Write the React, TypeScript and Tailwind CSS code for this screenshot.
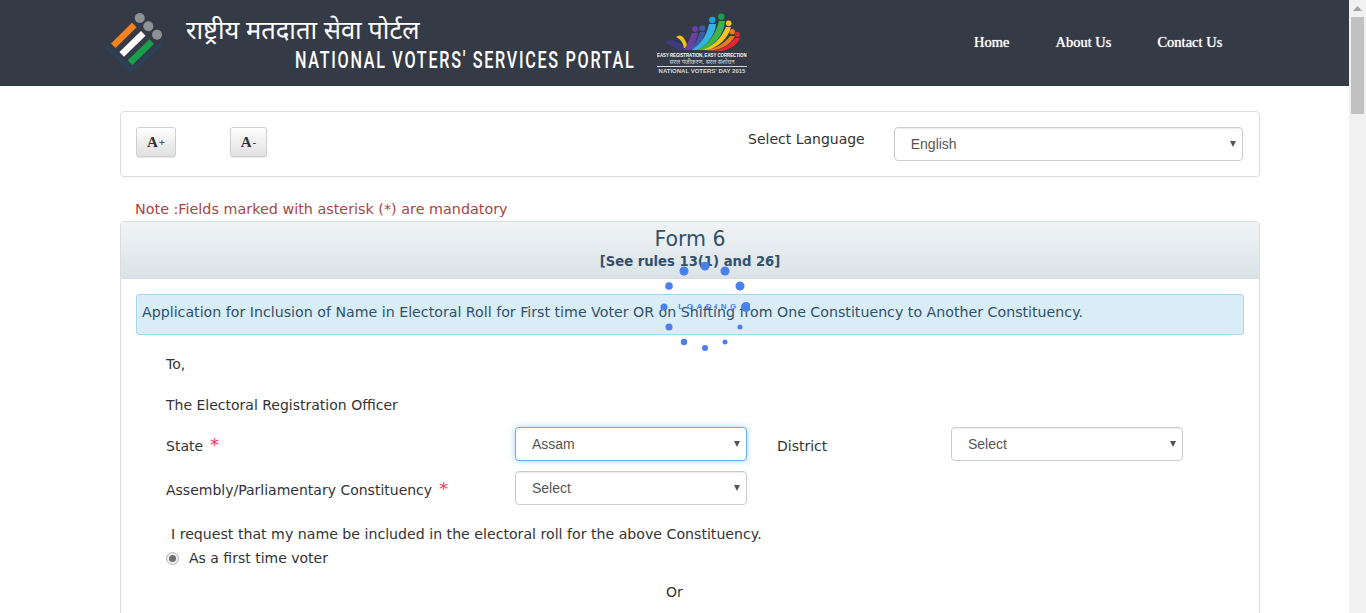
import React from 'react';

const sans = 'font-["DejaVu_Sans",Verdana,sans-serif]';

function PortalLogo() {
  return (
    <svg width="62" height="62" viewBox="0 0 62 62" className="shrink-0">
      <path d="M1 34.7 L26.7 58.7 L56.7 31.3" fill="none" stroke="#1d4a72" strokeWidth="2.5" strokeDasharray="2 1" />
      <g fill="#8f9193">
        <circle cx="34.7" cy="6" r="5" />
        <circle cx="43.3" cy="14.3" r="5" />
        <circle cx="52" cy="22.7" r="5" />
      </g>
      <g strokeWidth="6.5">
        <path d="M8.3 33.7 L29.3 13" stroke="#f58220" />
        <path d="M16.7 42.3 L38.3 21.3" stroke="#ffffff" />
        <path d="M25 50.7 L46.7 29.7" stroke="#16a04a" />
      </g>
    </svg>
  );
}

function VotersDayLogo() {
  return (
    <div className="flex w-[90px] flex-col">
      <svg width="90" height="38" viewBox="0 0 90 38">
        <path d="M8 29 C16 25 22 28 30 37 L22 37 C16 34 12 31 8 29 Z" fill="#3d3a80" />
        <path d="M19 24 C24 20 28 24 31 35 L27 35 C26 29 23 26 19 24 Z" fill="#f0c020" />
        <path d="M27 37 C31 30 33 25 35 20 L41 20 C40 27 36 33 33 37 Z" fill="#6b3fa0" />
        <path d="M32 37 C37 32 41 27 43 19 L48 19 C47 27 41 33 36 37 Z" fill="#3c5aa8" />
        <path d="M35 37 C44 31 50 22 52 11 L59 11 C58 23 49 32 41 37 Z" fill="#36b3e0" />
        <path d="M40 37 C50 32 59 22 62 8 L68 8 C67 23 56 33 46 37 Z" fill="#3cb44a" />
        <path d="M45 37 C55 34 64 26 69 14 L74 14 C71 26 61 34 51 37 Z" fill="#f5c518" />
        <path d="M50 37 C60 35 68 30 73 23 L78 23 C74 31 65 36 55 37.5 Z" fill="#ec7a24" />
        <path d="M54 38 C64 37 73 32 78 25 L83 25 C80 33 70 38 60 38.5 Z" fill="#e8262a" />
        <circle cx="38" cy="16" r="3" fill="#6b3fa0" />
        <circle cx="45.3" cy="15.3" r="3" fill="#3c5aa8" />
        <circle cx="55.3" cy="7" r="3.2" fill="#1fa3e0" />
        <circle cx="64.3" cy="3.7" r="3.2" fill="#16a04a" />
        <circle cx="71.7" cy="10.3" r="2.8" fill="#f5c518" />
        <circle cx="75.3" cy="18.7" r="2.6" fill="#ec7a24" />
        <circle cx="80.3" cy="21.3" r="2.6" fill="#e8262a" />
      </svg>
      <div className="mt-[1px] w-max origin-left scale-x-[0.72] font-['Liberation_Sans',sans-serif] text-[6px] leading-[7px] font-bold whitespace-nowrap text-white">
        EASY REGISTRATION, EASY CORRECTION
      </div>
      <div className="h-[6px] w-full text-center font-['Noto_Sans',sans-serif] text-[6px] leading-[6px] whitespace-nowrap text-[#d5d7da]">
        सरल पंजीकरण, सरल संशोधन
      </div>
      <div className="mt-[1px] h-px w-full bg-[#d5d7da]" />
      <div className="mt-[1px] w-full text-center font-['Liberation_Sans',sans-serif] text-[6px] leading-[7px] font-bold whitespace-nowrap text-[#d5d7da]">
        NATIONAL VOTERS' DAY 2015
      </div>
    </div>
  );
}

function Header() {
  return (
    <header className="flex h-[86px] shrink-0 items-start bg-[#343b46]">
      <div className="mt-[12px] ml-[105px]">
        <PortalLogo />
      </div>
      <div className="ml-[19px] w-[450px] text-white">
        <div className="mt-[11px] font-['Noto_Sans','Noto_Sans_Devanagari',sans-serif] text-[25.5px] leading-[36px] whitespace-nowrap">
          राष्ट्रीय मतदाता सेवा पोर्टल
        </div>
        <div className="mt-[1px] ml-[109px] w-max origin-left scale-x-[0.675] font-['Roboto',sans-serif] text-[24px] leading-[24px] font-medium tracking-[2.5px] whitespace-nowrap">
          NATIONAL VOTERS' SERVICES PORTAL
        </div>
      </div>
      <div className="mt-[13px] ml-[21px]">
        <VotersDayLogo />
      </div>
      <nav className="mt-[32px] ml-[227px] flex gap-[46px] font-['Liberation_Serif',serif] text-[14.5px] leading-[20px] text-white [text-shadow:0_0_1px_#ffffff]">
        <a>Home</a>
        <a>About Us</a>
        <a>Contact Us</a>
      </nav>
    </header>
  );
}

function SelectBox({ value, focused, className }: { value: string; focused?: boolean; className: string }) {
  return (
    <div className={`relative h-[34px] shrink-0 ${className}`}>
      <select
        defaultValue={value}
        className={
          'h-full w-full appearance-none rounded border bg-white pl-4 font-["Liberation_Sans",Arial,sans-serif] text-sm text-[#555555] outline-none ' +
          (focused
            ? 'border-[#66afe9] shadow-[0_0_6px_rgba(102,175,233,0.6)]'
            : 'border-[#cccccc] shadow-[inset_0_1px_1px_rgba(0,0,0,0.075)]')
        }
      >
        <option>{value}</option>
      </select>
      <svg width="6" height="6" viewBox="0 0 6 6" className="pointer-events-none absolute top-[14px] right-[7px]">
        <path d="M0 0 H6 L3 6 Z" fill="#555555" />
      </svg>
    </div>
  );
}

function FontButton({ label, sign, className }: { label: string; sign: string; className: string }) {
  return (
    <button
      className={`flex h-[30px] items-center justify-center rounded-[3px] border border-[#cfcfcf] bg-gradient-to-b from-white to-[#e0e0e0] font-['Liberation_Serif',serif] text-[#333333] shadow-[0_1px_1px_rgba(0,0,0,0.1)] ${className}`}
    >
      <span className="text-[15px] font-bold">{label}</span>
      <span className="ml-[1px] text-[11px] font-bold">{sign}</span>
    </button>
  );
}

function Spinner() {
  const dots = [
    [24, 9, 4.5], [45, 4, 4.5], [65, 9, 4.5], [80, 24, 4.5], [86, 45, 5],
    [80, 65, 2.5], [65, 80, 2.5], [45, 86, 3], [24, 80, 3.2], [9, 65, 3.5],
    [4, 45, 3.5], [9, 24, 3.8],
  ];
  return (
    <div className="absolute top-[262px] left-[660px] flex h-[90px] w-[90px] items-center justify-center">
      <svg width="90" height="90" viewBox="0 0 90 90" className="absolute inset-0">
        {dots.map(([x, y, r]) => (
          <circle key={`${x}-${y}`} cx={x} cy={y} r={r} fill="#4a7fee" />
        ))}
      </svg>
      <span className="ml-[8px] font-['Liberation_Sans',sans-serif] text-[8px] font-bold tracking-[3.5px] text-[#4a7fee]">LOADING</span>
    </div>
  );
}

function Required() {
  return <span className="ml-[7px] text-[18px] leading-[0] text-[#ff3355]">*</span>;
}

function FormPanel() {
  return (
    <section className="mt-[2px] rounded-t border border-b-0 border-[#dddddd]">
      <div className="flex h-[57px] flex-col items-center border-b border-[#dddddd] bg-gradient-to-b from-[#f1f4f6] to-[#d9e3e6]">
        <h2 className="mt-[4px] text-[20.5px] leading-[26px] text-[#34506b]">Form 6</h2>
        <p className="mt-[1px] text-[13.2px] leading-[18px] font-bold text-[#34506b]">[See rules 13(1) and 26]</p>
      </div>

      <div className="h-[400px] px-[15px] pt-[15px] text-[14px] leading-[20px] text-[#333333]">
        <div className="flex h-[41px] items-center rounded-[3px] border border-[#a8d6ea] bg-[#d9edf7] px-[5px] pb-[5px] text-[14.2px] text-[#31506b]">
          Application for Inclusion of Name in Electoral Roll for First time Voter OR on Shifting from One Constituency to Another Constituency.
        </div>

        <div className="pl-[30px]">
          <p className="mt-[19px]">To,</p>
          <p className="mt-[21px]">The Electoral Registration Officer</p>

          <div className="mt-[12px] flex items-start">
            <label className="w-[349px] pt-[9px]">
              State<Required />
            </label>
            <SelectBox value="Assam" focused className="w-[232px]" />
            <label className="ml-[30px] w-[174px] pt-[9px]">District</label>
            <SelectBox value="Select" className="w-[232px]" />
          </div>

          <div className="mt-[10px] flex items-start">
            <label className="w-[349px] pt-[9px]">
              Assembly/Parliamentary Constituency<Required />
            </label>
            <SelectBox value="Select" className="w-[232px]" />
          </div>

          <p className="mt-[19px] pl-[5px] text-[14.15px]">I request that my name be included in the electoral roll for the above Constituency.</p>

          <div className="mt-[4px] flex items-center">
            <span className="flex h-[13px] w-[13px] items-center justify-center rounded-full border border-[#b5b5b5] bg-[#eeeeee]">
              <span className="h-[7px] w-[7px] rounded-full bg-[#6f6f6f]" />
            </span>
            <span className="ml-[10px]">As a first time voter</span>
          </div>

          <p className="mt-[14px] pl-[500px]">Or</p>
        </div>
      </div>
    </section>
  );
}

function Scrollbar() {
  return (
    <div className="flex h-full w-[17px] shrink-0 flex-col items-center bg-[#f1f1f1]">
      <svg width="9" height="5" viewBox="0 0 9 5" className="mt-[6px]">
        <path d="M4.5 0 L9 5 H0 Z" fill="#a3a3a3" />
      </svg>
      <div className="mt-[6px] h-[97px] w-[13px] bg-[#c1c1c1]" />
    </div>
  );
}

export default function App() {
  return (
    <div className={`relative flex h-[613px] overflow-hidden bg-white ${sans}`}>
      <div className="min-w-0 flex-1">
        <Header />
        <main className="ml-[120px] w-[1140px] pt-[25px]">
          <div className="flex h-[66px] items-start rounded border border-[#dddddd] px-[15px] pt-[15px] shadow-[0_1px_1px_rgba(0,0,0,0.05)]">
            <FontButton label="A" sign="+" className="w-[40px]" />
            <FontButton label="A" sign="-" className="ml-[54px] w-[37px]" />
            <span className="ml-[481px] text-[14px] leading-[24px] text-[#333333]">Select Language</span>
            <SelectBox value="English" className="ml-[29px] w-[349px]" />
          </div>

          <p className="mt-[22px] pl-[15px] text-[14.35px] leading-[20px] text-[#a94442]">Note :Fields marked with asterisk (*) are mandatory</p>

          <FormPanel />
        </main>
      </div>
      <Scrollbar />
      <Spinner />
    </div>
  );
}
